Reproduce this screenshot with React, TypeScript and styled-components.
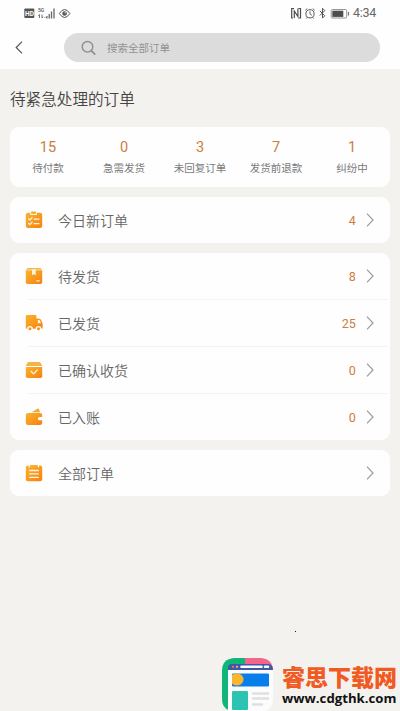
import React from "react";
import styled, { createGlobalStyle } from "styled-components";

const Global = createGlobalStyle`
  * { box-sizing: border-box; }
  body { margin: 0; background: #f3f2ee; font-family: Roboto, "Noto Sans CJK SC", sans-serif; }
`;

const Page = styled.main`
  position: relative;
  width: 400px;
  height: 711px;
  overflow: hidden;
  background: #f3f2ee;
  color: #555;
`;
const Header = styled.header`
  height: 69px;
  background: #fefefe;
`;
const StatusBar = styled.div`
  height: 33px;
  padding: 0 24px 8px;
  display: flex;
  justify-content: space-between;
  align-items: center;
`;
const StatusLeft = styled.svg`
  display: block;
  width: 48px;
  height: 14px;
`;
const StatusRight = styled.div`
  display: flex;
  align-items: center;
  gap: 3px;
`;
const Clock = styled.span`
  font-size: 12.5px;
  line-height: 14px;
  color: #666;
  width: 23px;
  white-space: nowrap;
  letter-spacing: -0.3px;
`;
const SearchRow = styled.div`
  display: flex;
  height: 29px;
  padding: 0 20px 0 14px;
  align-items: center;
`;
const Back = styled.div`
  width: 50px;
  height: 16px;
`;
const SearchBox = styled.div`
  flex: 1;
  height: 29px;
  border-radius: 15px;
  background: #dcdcdc;
  display: flex;
  align-items: center;
  padding-left: 17px;
  gap: 11px;
  font-size: 10.5px;
  color: #929292;
`;
const Title = styled.h1`
  margin: 0;
  height: 58px;
  padding: 19px 10px 0;
  font-size: 15.6px;
  line-height: 24px;
  font-weight: 350;
  color: #444;
`;
const Stack = styled.div`
  display: flex;
  flex-direction: column;
  gap: 10px;
  padding: 0 10px;
`;
const Card = styled.section`
  background: #fefefe;
  border-radius: 9px;
`;
const Stats = styled(Card)`
  display: grid;
  grid-template-columns: repeat(5, 76px);
  height: 60px;
  padding-top: 12px;
  text-align: center;
`;
const StatValue = styled.div`
  font-size: 14.5px;
  line-height: 17px;
  color: #cc7d42;
`;
const StatLabel = styled.div`
  margin-top: 5px;
  font-size: 10.5px;
  line-height: 16px;
  color: #7a7a7a;
  white-space: nowrap;
`;
const Row = styled.div<{ $divided?: boolean }>`
  height: ${(p) => (p.$divided ? 47 : 46)}px;
  display: flex;
  align-items: center;
  padding: ${(p) => (p.$divided ? "0 16px 1px 15px" : "0 16px 0 15px")};
  background: ${(p) =>
    p.$divided ? "linear-gradient(#f3f3f2, #f3f3f2) 18px 100% / calc(100% - 20px) 1px no-repeat" : "none"};
`;
const RowLabel = styled.span`
  flex: 1;
  margin-left: 15px;
  padding-top: 1px;
  font-size: 14px;
  line-height: 20px;
  font-weight: 350;
  color: #666;
`;
const Count = styled.span`
  font-size: 12.5px;
  color: #cc7d42;
  letter-spacing: 0.1px;
  margin: 1px 10px 0 0;
`;
const Watermark = styled.div`
  position: absolute;
  left: 221px;
  top: 657px;
  width: 179px;
  height: 54px;
  display: flex;
  gap: 8px;
`;
const Brand = styled.div`
  padding-top: 6px;
  white-space: nowrap;
`;
const BrandName = styled.div`
  font: 900 23px/26px "Noto Sans CJK SC", sans-serif;
  color: #f15a22;
`;
const BrandUrl = styled.div`
  font: 700 13.2px/16px "Open Sans", sans-serif;
  margin-top: 1px;
  color: #111;
`;
const Speck = styled.i`
  position: absolute;
  left: 295px;
  top: 631px;
  width: 1px;
  height: 1px;
  background: #10106a;
`;

type IconKind = "checklist" | "box" | "truck" | "received" | "wallet" | "list";

function OrderIcon({ kind }: { kind: IconKind }) {
  const fill = `url(#fill-${kind})`;
  const line = { fill: "none", stroke: "#fff6df", strokeWidth: 1.3, strokeLinecap: "round" as const, strokeLinejoin: "round" as const };
  return (
    <svg width="18" height="18" viewBox="0 0 18 18">
      <defs>
        <linearGradient id={`fill-${kind}`} x1="0" y1="0" x2="1" y2="1">
          <stop offset="0" stopColor="#f9b42c" />
          <stop offset="1" stopColor="#f68112" />
        </linearGradient>
      </defs>
      {kind === "checklist" && (
        <>
          <rect x="0.8" y="1.8" width="16.4" height="15.2" rx="2.3" fill={fill} />
          <path d="M5 0.7h7v2.2q0 1.2-1.2 1.2H6.2Q5 4.1 5 2.9z" fill="#fff3d5" />
          <rect x="6" y="0.5" width="5" height="2.4" rx="1" fill="#f3ad43" />
          <path d="M3.6 7.8l1.3 1.2 2.2-2.4M3.6 12.4l1.3 1.2 2.2-2.4M9.2 8.1h4.8M9.2 12.7h4.8" {...line} />
        </>
      )}
      {kind === "box" && (
        <>
          <path d="M2.3 1h13.4l1.3 1.7H1z" fill="#f3ba52" />
          <path d="M0.8 3.3h16.4v12q0 1.7-1.7 1.7h-13Q0.8 17 0.8 15.3z" fill={fill} />
          <path d="M7 2.5h3.7v5.8L8.85 7 7 8.3z" fill="#fff6df" />
          <path d="M11.7 13.8h2.5" {...line} />
        </>
      )}
      {kind === "truck" && (
        <>
          <path d="M2 1h8.3q1.1 0 1.1 1.1v2.4h2q2 0 2.8 1.5l1.4 3.6v4q0 1.2-1.2 1.2H2q-1.2 0-1.2-1.2V2.2Q0.800 1 2 1z" fill={fill} />
          <path d="M12.8 6h1.1q0.700 0 1 0.600l1.100 2.700h-3.200z" fill="#fff3d5" />
          <circle cx="5" cy="14.8" r="2.200" fill="#f99620" stroke="#fffdf8" strokeWidth="1.3" />
          <circle cx="13.500" cy="14.8" r="2.200" fill="#f99620" stroke="#fffdf8" strokeWidth="1.3" />
        </>
      )}
      {kind === "received" && (
        <>
          <path d="M3.8 0.900h10.4q0.800 0 1.300 0.800l1.700 2.800v0.500H0.800v-0.500l1.700-2.800q0.500-0.800 1.300-0.800z" fill="#f1b34a" />
          <path d="M0.800 6h16.4v9.3q0 1.700-1.700 1.700h-13Q0.800 17 0.800 15.300z" fill={fill} />
          <path d="M6.200 10.500l2.400 2.400 3.800-4" {...line} />
        </>
      )}
      {kind === "wallet" && (
        <>
          <path d="M6.5 4.300l6-3.600q1.100-0.500 1.500 0.600l1 3z" fill="#efa93e" />
          <path d="M3 5h12q2.200 0 2.200 2v2.100h-2.500q-1.900 0-1.900 1.600t1.900 1.600h2.500v2.400q0 2.300-2.200 2.300H3q-2.200 0-2.200-2.200V7Q0.800 5 3 5z" fill={fill} />
        </>
      )}
      {kind === "list" && (
        <>
          <rect x="0.800" y="1.500" width="16.4" height="15.700" rx="2" fill={fill} />
          <path d="M4.200 1v2.500M13.500 1v2.500" stroke="#fff9ec" strokeWidth="1.200" />
          <path d="M5.200 1.800h7.200" stroke="#f4b347" strokeWidth="1.800" />
          <path d="M4.700 6.500h8.600M4.700 9.900h8.600M4.700 13.300h8.600" {...line} />
        </>
      )}
    </svg>
  );
}

function Chevron() {
  return (
    <svg width="8" height="14" viewBox="0 0 8 14">
      <path d="M1 0.700L7 7 1 13.300" fill="none" stroke="#9b9b9b" strokeWidth="1.200" />
    </svg>
  );
}

function OrderRow({ icon, label, count, divided }: { icon: IconKind; label: string; count?: number; divided?: boolean }) {
  return (
    <Row $divided={divided}>
      <OrderIcon kind={icon} />
      <RowLabel>{label}</RowLabel>
      {count !== undefined && <Count>{count}</Count>}
      <Chevron />
    </Row>
  );
}

const stats = [
  ["15", "待付款"],
  ["0", "急需发货"],
  ["3", "未回复订单"],
  ["7", "发货前退款"],
  ["1", "纠纷中"],
];

export default function App() {
  return (
    <>
      <Global />
      <Page>
        <Header>
          <StatusBar>
            <StatusLeft viewBox="0 0 48 14">
              <rect x="0.300" y="2.500" width="10" height="9.500" rx="1" fill="#555" />
              <text x="1" y="9.800" fontSize="6.600" fontWeight="700" fontFamily="Roboto, sans-serif" fill="#fff">HD</text>
              <text x="14" y="6.200" fontSize="5" fontWeight="500" fontFamily="Roboto, sans-serif" fill="#555">5G</text>
              <path d="M15.500 8.500v3.500M14.300 9.700l1.200-1.200M18 8.500v3.500l1.200-1.200M21 12v-1" fill="none" stroke="#666" strokeWidth="0.900" />
              <path d="M22.900 12.500v-2.500M25.200 12.500V8M27.500 12.500V5.500M30 12.500V2.500" stroke="#666" strokeWidth="1.300" />
              <path d="M35.300 7.500q5.300-8 10.600 0-5.300 8-10.600 0z" fill="none" stroke="#555" />
              <circle cx="40.600" cy="7.500" r="2.300" fill="#555" />
              <circle cx="41.300" cy="6.800" r="0.700" fill="#ddd" />
            </StatusLeft>
            <StatusRight>
              <svg width="60" height="14" viewBox="0 0 60 14">
                <path d="M4 2.500H1.700v9.500H3M8.500 2.500h2v9.500H8.500" fill="none" stroke="#4d4d4d" strokeWidth="1.200" />
                <path d="M4.300 12V5l3.600 5.500V2.500" fill="none" stroke="#4d4d4d" strokeWidth="1.200" />
                <circle cx="20" cy="7.800" r="4.100" fill="none" stroke="#555" />
                <path d="M15.300 4.300l2-1.800M24.700 4.300l-2-1.800M20 5.300v2.700l1.900 1.300M17.300 11.300l-1 1.200M22.700 11.300l1 1.200" fill="none" stroke="#555" strokeWidth="0.900" />
                <path d="M29.800 4.800l5 5-2.300 2.300V2.300l2.300 2.300-5 5" fill="none" stroke="#555" />
                <rect x="41.200" y="3.500" width="15.500" height="8.500" rx="1.200" fill="#fff" stroke="#888" strokeWidth="0.900" />
                <rect x="42.300" y="4.700" width="11" height="6.200" fill="#4d4d4d" />
                <path d="M58.500 6v3.500" stroke="#777" strokeWidth="1.200" />
              </svg>
              <Clock>4:34</Clock>
            </StatusRight>
          </StatusBar>
          <SearchRow>
            <Back>
              <svg width="10" height="16" viewBox="0 0 10 16">
                <path d="M8 1.700L2.200 7.500 8 13.300" fill="none" stroke="#555" strokeWidth="1.200" />
              </svg>
            </Back>
            <SearchBox>
              <svg width="15" height="16" viewBox="0 0 15 16">
                <circle cx="6.500" cy="6.800" r="5.300" fill="none" stroke="#8e8e8e" strokeWidth="1.400" />
                <path d="M10.300 10.700l3.900 3.900" stroke="#8e8e8e" strokeWidth="1.700" />
              </svg>
              搜索全部订单
            </SearchBox>
          </SearchRow>
        </Header>
        <Title>待紧急处理的订单</Title>
        <Stack>
          <Stats>
            {stats.map(([value, label]) => (
              <div key={label}>
                <StatValue>{value}</StatValue>
                <StatLabel>{label}</StatLabel>
              </div>
            ))}
          </Stats>
          <Card>
            <OrderRow icon="checklist" label="今日新订单" count={4} />
          </Card>
          <Card>
            <OrderRow icon="box" label="待发货" count={8} divided />
            <OrderRow icon="truck" label="已发货" count={25} divided />
            <OrderRow icon="received" label="已确认收货" count={0} divided />
            <OrderRow icon="wallet" label="已入账" count={0} />
          </Card>
          <Card>
            <OrderRow icon="list" label="全部订单" />
          </Card>
        </Stack>
        <Speck />
        <Watermark>
          <svg width="53" height="54" viewBox="0 0 53 54">
            <path d="M13 1h15v52H8q-7-2-7-11V14Q1 2 13 1z" fill="#10b679" />
            <path d="M24 1h16q12 1 12 13H24z" fill="#f5658a" />
            <path d="M7 12h45v30q0 9-7 12H7z" fill="#fcfcfc" />
            <path d="M7 13v-2q0-4 4-4h37q4 1 4 6z" fill="#3e57a7" />
            <circle cx="12" cy="9.800" r="1.100" fill="#fa715d" />
            <circle cx="16" cy="9.800" r="1.100" fill="#fbc05d" />
            <path d="M20.500 9.800h20M44 9.800h3" stroke="#fff" strokeWidth="2.600" strokeLinecap="round" />
            <rect x="11" y="16.500" width="37" height="13" rx="1.300" fill="#087eea" />
            <path d="M11 18q2-2 6-1.500a6 6 0 0 1-1 12q-3.500 0-5-2z" fill="#fbb62e" />
            <rect x="11" y="34" width="16" height="19" rx="1.300" fill="#2bc3b2" />
            <path d="M32 36.500h15M32 41.500h15M32 47.500h9" stroke="#dedfe1" strokeWidth="2.400" strokeLinecap="round" />
          </svg>
          <Brand>
            <BrandName>睿思下载网</BrandName>
            <BrandUrl>www.cdgthk.com</BrandUrl>
          </Brand>
        </Watermark>
      </Page>
    </>
  );
}
